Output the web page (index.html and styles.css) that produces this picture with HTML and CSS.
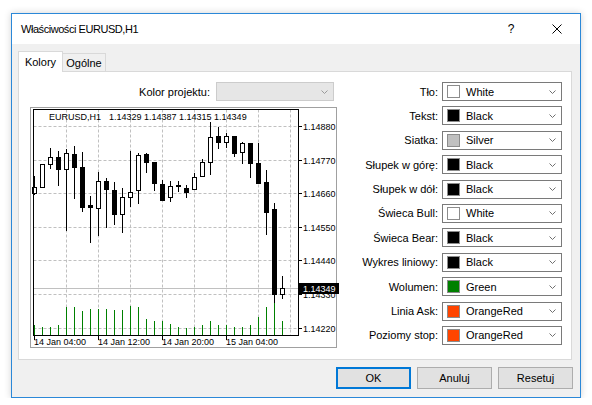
FILE: index.html
```html
<!DOCTYPE html>
<html lang="pl">
<head>
<meta charset="utf-8">
<title>Właściwości EURUSD,H1</title>
<link rel="stylesheet" href="styles.css">
</head>
<body>
<div class="window">
  <div class="titlebar">
    <span class="title">Właściwości EURUSD,H1</span>
    <span class="cap-btn help">?</span>
    <span class="cap-btn close"><svg width="10" height="10" viewBox="0 0 10 10"><path d="M0.5 0.5L9.5 9.5M9.5 0.5L0.5 9.5" stroke="#000" stroke-width="1" fill="none"/></svg></span>
  </div>
  <div class="body">
    <div class="tabs">
      <div class="tab active">Kolory</div>
      <div class="tab">Ogólne</div>
    </div>
    <div class="panel">
      <div class="left">
        <div class="project-row">
          <span>Kolor projektu:</span>
          <div class="combo disabled"><svg class="chev" width="7" height="4" viewBox="0 0 7 4"><path d="M0.5 0.5L3.5 3.5L6.5 0.5" fill="none" stroke="#9a9a9a"/></svg></div>
        </div>
        <div class="chart">
          <svg class="chart-svg" width="305" height="239" viewBox="0 0 305 239">
            <g class="grid">
              <path d="M2.5 18.5H267.5M2.5 52.5H267.5M2.5 85.5H267.5M2.5 119.5H267.5M2.5 152.5H267.5M2.5 186.5H267.5M2.5 220.5H267.5"/>
              <path d="M35.5 1.5V227.5M67.5 1.5V227.5M99.5 1.5V227.5M131.5 1.5V227.5M163.5 1.5V227.5M195.5 1.5V227.5M227.5 1.5V227.5M259.5 1.5V227.5"/>
            </g>
            <path class="askline" d="M2.5 180.5H267.5"/>
            <path class="vol" d="M3.5 217V227M11.5 219V227M19.5 219V227M27.5 217V227M35.5 199V227M43.5 199V227M51.5 203V227M59.5 201V227M67.5 201V227M75.5 201V227M83.5 202V227M91.5 202V227M99.5 198V227M107.5 199V227M115.5 211V227M123.5 213V227M131.5 213V227M139.5 216V227M147.5 219V227M155.5 220V227M163.5 219V227M171.5 217V227M179.5 213V227M187.5 217V227M195.5 217V227M203.5 219V227M211.5 219V227M219.5 217V227M227.5 209V227M235.5 199V227M243.5 195V227M251.5 213V227"/>
            <path class="wick" d="M3.5 68V87M11.5 56V80M19.5 40V61M27.5 43V78M35.5 41V123M43.5 38V91M51.5 44V104M59.5 88V135M67.5 64V128M75.5 70V120M83.5 74V117M91.5 80V125M99.5 43V99M107.5 45V96M115.5 45V65M123.5 54V83M131.5 72V92M139.5 73V94M147.5 73V84M155.5 77V90M163.5 65V82M171.5 51V68M179.5 14V67M187.5 19V41M195.5 25V40M203.5 28V49M211.5 34V56M219.5 35V70M227.5 35V76M235.5 62V127M243.5 95V195M251.5 168V191"/>
            <g class="bull">
              <rect x="1.5" y="79.5" width="4" height="6"/>
              <rect x="9.5" y="56.5" width="4" height="23"/>
              <rect x="17.5" y="49.5" width="4" height="7"/>
              <rect x="33.5" y="45.5" width="4" height="16"/>
              <rect x="65.5" y="73.5" width="4" height="27"/>
              <rect x="89.5" y="89.5" width="4" height="17"/>
              <rect x="97.5" y="84.5" width="4" height="5"/>
              <rect x="105.5" y="47.5" width="4" height="35"/>
              <rect x="137.5" y="78.5" width="4" height="11"/>
              <rect x="161.5" y="69.5" width="4" height="12"/>
              <rect x="169.5" y="54.5" width="4" height="14"/>
              <rect x="177.5" y="29.5" width="4" height="25"/>
              <rect x="193.5" y="28.5" width="4" height="6"/>
              <rect x="209.5" y="35.5" width="4" height="9"/>
              <rect x="249.5" y="180.5" width="4" height="6"/>
            </g>
            <g class="bear">
              <rect x="25" y="49" width="5" height="13"/>
              <rect x="41" y="46" width="5" height="14"/>
              <rect x="49" y="59" width="5" height="41"/>
              <rect x="57" y="97" width="5" height="3"/>
              <rect x="73" y="73" width="5" height="9"/>
              <rect x="81" y="82" width="5" height="25"/>
              <rect x="113" y="46" width="5" height="9"/>
              <rect x="121" y="54" width="5" height="22"/>
              <rect x="129" y="76" width="5" height="17"/>
              <rect x="145" y="77" width="5" height="2"/>
              <rect x="153" y="80" width="5" height="5"/>
              <rect x="185" y="28" width="5" height="7"/>
              <rect x="201" y="28" width="5" height="18"/>
              <rect x="217" y="35" width="5" height="21"/>
              <rect x="225" y="55" width="5" height="21"/>
              <rect x="233" y="74" width="5" height="31"/>
              <rect x="241" y="101" width="5" height="86"/>
            </g>
            <rect class="frame" x="2.5" y="1.5" width="265" height="226"/>
            <path class="tick" d="M268 18.5H271M268 52.5H271M268 85.5H271M268 119.5H271M268 152.5H271M268 186.5H271M268 220.5H271M3.5 228V232M67.5 228V232M131.5 228V232M195.5 228V232"/>
            <g class="ax">
              <text x="18" y="12">EURUSD,H1</text>
              <text x="78" y="12">1.14329 1.14387 1.14315 1.14349</text>
              <text x="272" y="21.5">1.14880</text>
              <text x="272" y="55.5">1.14770</text>
              <text x="272" y="88.5">1.14660</text>
              <text x="272" y="122.5">1.14550</text>
              <text x="272" y="155.5">1.14440</text>
              <text x="272" y="189.5">1.14330</text>
              <text x="272" y="223.5">1.14220</text>
              <text x="3" y="236.5">14 Jan 04:00</text>
              <text x="67" y="236.5">14 Jan 12:00</text>
              <text x="131" y="236.5">14 Jan 20:00</text>
              <text x="195" y="236.5">15 Jan 04:00</text>
            </g>
            <rect x="267" y="175" width="41" height="11" fill="#000"/>
            <text class="ax price-now" x="272" y="184">1.14349</text>
          </svg>
        </div>
      </div>
      <div class="settings">
        <span class="lbl">Tło:</span>
        <div class="combo"><span class="swatch" style="background:#ffffff"></span><span class="name">White</span><svg class="chev" width="7" height="4" viewBox="0 0 7 4"><path d="M0.5 0.5L3.5 3.5L6.5 0.5" fill="none" stroke="#707070"/></svg></div>
        <span class="lbl">Tekst:</span>
        <div class="combo"><span class="swatch" style="background:#000000"></span><span class="name">Black</span><svg class="chev" width="7" height="4" viewBox="0 0 7 4"><path d="M0.5 0.5L3.5 3.5L6.5 0.5" fill="none" stroke="#707070"/></svg></div>
        <span class="lbl">Siatka:</span>
        <div class="combo"><span class="swatch" style="background:#c0c0c0"></span><span class="name">Silver</span><svg class="chev" width="7" height="4" viewBox="0 0 7 4"><path d="M0.5 0.5L3.5 3.5L6.5 0.5" fill="none" stroke="#707070"/></svg></div>
        <span class="lbl">Słupek w górę:</span>
        <div class="combo"><span class="swatch" style="background:#000000"></span><span class="name">Black</span><svg class="chev" width="7" height="4" viewBox="0 0 7 4"><path d="M0.5 0.5L3.5 3.5L6.5 0.5" fill="none" stroke="#707070"/></svg></div>
        <span class="lbl">Słupek w dół:</span>
        <div class="combo"><span class="swatch" style="background:#000000"></span><span class="name">Black</span><svg class="chev" width="7" height="4" viewBox="0 0 7 4"><path d="M0.5 0.5L3.5 3.5L6.5 0.5" fill="none" stroke="#707070"/></svg></div>
        <span class="lbl">Świeca Bull:</span>
        <div class="combo"><span class="swatch" style="background:#ffffff"></span><span class="name">White</span><svg class="chev" width="7" height="4" viewBox="0 0 7 4"><path d="M0.5 0.5L3.5 3.5L6.5 0.5" fill="none" stroke="#707070"/></svg></div>
        <span class="lbl">Świeca Bear:</span>
        <div class="combo"><span class="swatch" style="background:#000000"></span><span class="name">Black</span><svg class="chev" width="7" height="4" viewBox="0 0 7 4"><path d="M0.5 0.5L3.5 3.5L6.5 0.5" fill="none" stroke="#707070"/></svg></div>
        <span class="lbl">Wykres liniowy:</span>
        <div class="combo"><span class="swatch" style="background:#000000"></span><span class="name">Black</span><svg class="chev" width="7" height="4" viewBox="0 0 7 4"><path d="M0.5 0.5L3.5 3.5L6.5 0.5" fill="none" stroke="#707070"/></svg></div>
        <span class="lbl">Wolumen:</span>
        <div class="combo"><span class="swatch" style="background:#008000"></span><span class="name">Green</span><svg class="chev" width="7" height="4" viewBox="0 0 7 4"><path d="M0.5 0.5L3.5 3.5L6.5 0.5" fill="none" stroke="#707070"/></svg></div>
        <span class="lbl">Linia Ask:</span>
        <div class="combo"><span class="swatch" style="background:#ff4500"></span><span class="name">OrangeRed</span><svg class="chev" width="7" height="4" viewBox="0 0 7 4"><path d="M0.5 0.5L3.5 3.5L6.5 0.5" fill="none" stroke="#707070"/></svg></div>
        <span class="lbl">Poziomy stop:</span>
        <div class="combo"><span class="swatch" style="background:#ff4500"></span><span class="name">OrangeRed</span><svg class="chev" width="7" height="4" viewBox="0 0 7 4"><path d="M0.5 0.5L3.5 3.5L6.5 0.5" fill="none" stroke="#707070"/></svg></div>
      </div>
    </div>
    <div class="buttons">
      <button class="btn default">OK</button>
      <button class="btn">Anuluj</button>
      <button class="btn">Resetuj</button>
    </div>
  </div>
</div>
</body>
</html>
```
FILE: styles.css
```css
html, body {
  margin: 0;
  padding: 0;
  background: #ffffff;
}
body {
  font-family: "Liberation Sans", Arial, sans-serif;
  font-size: 11px;
  color: #000;
}
.window {
  margin: 13px 0 0 11px;
  width: 570px;
  height: 385px;
  box-sizing: border-box;
  border: 1px solid #2b88d8;
  background: #f0f0f0;
  display: flex;
  flex-direction: column;
  box-shadow: 0 0 7px rgba(0, 0, 0, 0.18);
}
.titlebar {
  height: 30px;
  flex: none;
  background: #ffffff;
  display: flex;
  align-items: center;
  padding-left: 9px;
}
.title {
  flex: 1;
  font-size: 11px;
  letter-spacing: -0.45px;
}
.cap-btn {
  width: 46px;
  height: 30px;
  display: flex;
  align-items: center;
  justify-content: center;
}
.help {
  font-size: 12px;
}
.body {
  flex: 1;
  display: flex;
  flex-direction: column;
  padding: 7px 0 0 6px;
}
.tabs {
  display: flex;
  align-items: flex-end;
  height: 21px;
  margin-bottom: -1px;
  position: relative;
  z-index: 1;
}
.tab {
  box-sizing: border-box;
  border: 1px solid #d9d9d9;
  border-bottom: none;
  text-align: center;
  display: flex;
  align-items: center;
  justify-content: center;
}
.tab.active {
  width: 45px;
  height: 21px;
  background: #ffffff;
  padding-bottom: 1px;
}
.tab:not(.active) {
  width: 43px;
  height: 18px;
  margin-bottom: 1px;
  border-left: none;
  background: #f0f0f0;
}
.panel {
  width: 554px;
  height: 289px;
  box-sizing: border-box;
  border: 1px solid #d9d9d9;
  background: #ffffff;
  display: flex;
  justify-content: space-between;
  padding: 10px 9px 0 11px;
}
.left {
  width: 307px;
  display: flex;
  flex-direction: column;
}
.project-row {
  display: flex;
  justify-content: flex-end;
  align-items: center;
  gap: 6px;
  height: 19px;
  padding-right: 3px;
}
.chart {
  margin-top: 6px;
  height: 241px;
  box-sizing: border-box;
  border: 1px solid #a0a0a0;
  background: #ffffff;
}
.chart-svg {
  display: block;
  overflow: visible;
}
.grid path {
  fill: none;
  stroke: #c0c0c0;
  stroke-width: 1;
  stroke-dasharray: 3 2;
}
.askline {
  fill: none;
  stroke: #c0c0c0;
  stroke-width: 1;
}
.vol {
  fill: none;
  stroke: #008000;
  stroke-width: 1;
}
.wick {
  fill: none;
  stroke: #000;
  stroke-width: 1;
}
.bull rect {
  fill: #ffffff;
  stroke: #000;
  stroke-width: 1;
}
.bear rect {
  fill: #000;
}
.frame {
  fill: none;
  stroke: #000;
  stroke-width: 1;
}
.tick {
  fill: none;
  stroke: #000;
  stroke-width: 1;
}
.ax {
  font-family: "Liberation Sans", Arial, sans-serif;
  font-size: 9px;
  fill: #000;
}
.ax.price-now {
  fill: #ffffff;
}
.settings {
  display: grid;
  grid-template-columns: auto 120px;
  grid-auto-rows: 19px;
  column-gap: 4px;
  row-gap: 5.4px;
  align-items: center;
  align-content: start;
}
.lbl {
  text-align: right;
  white-space: nowrap;
}
.combo {
  box-sizing: border-box;
  height: 19px;
  border: 1px solid #7a7a7a;
  background: #ffffff;
  display: flex;
  align-items: center;
  padding-left: 4px;
}
.combo.disabled {
  width: 118px;
  border-color: #cccccc;
  background: #e6e6e6;
}
.swatch {
  width: 13px;
  height: 13px;
  box-sizing: border-box;
  border: 1px solid #8c8c8c;
  flex: none;
}
.name {
  margin-left: 6px;
}
.chev {
  margin-left: auto;
  margin-right: 5px;
  flex: none;
}
.buttons {
  display: flex;
  justify-content: flex-end;
  gap: 6px;
  margin-top: 7px;
  padding-right: 7px;
}
.btn {
  width: 75px;
  height: 22px;
  box-sizing: border-box;
  border: 1px solid #adadad;
  background: #e1e1e1;
  font-family: "Liberation Sans", Arial, sans-serif;
  font-size: 11px;
  color: #000;
  padding: 0;
}
.btn.default {
  border: 2px solid #0078d7;
}
```
